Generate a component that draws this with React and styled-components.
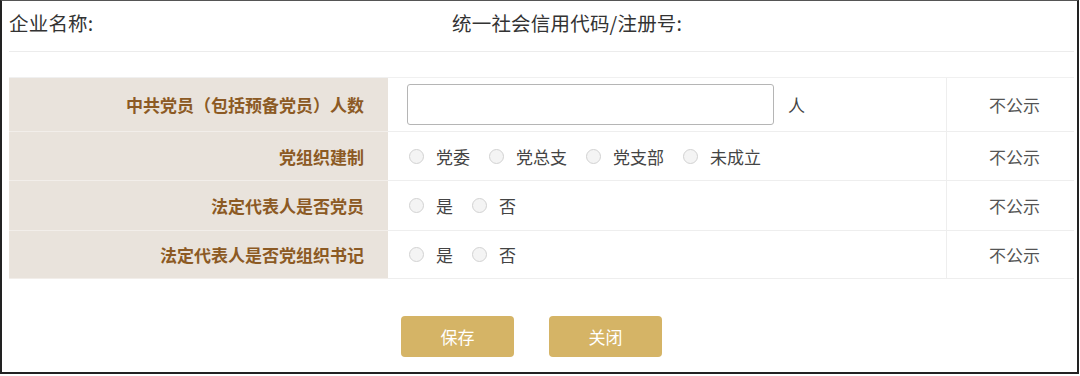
import React from "react";
import styled, { createGlobalStyle } from "styled-components";

const Global = createGlobalStyle`
  html, body { margin: 0; padding: 0; background: #fff; }
  body { font-family: "Microsoft YaHei", "Noto Sans CJK SC", "Noto Sans", sans-serif; }
`;

const Frame = styled.div`
  box-sizing: border-box;
  width: 1079px;
  height: 374px;
  border-top: 1px solid #555;
  border-left: 2px solid #222;
  border-right: 2px solid #222;
  border-bottom: 2px solid #222;
  background: #fff;
  padding: 0 3px 0 7px;
  display: flex;
  flex-direction: column;
`;

const Header = styled.div`
  display: grid;
  grid-template-columns: 443px 1fr;
  height: 51px;
  align-items: center;
  border-bottom: 1px solid #ececec;
  font-size: 19.5px;
  color: #333;
  padding-bottom: 8px;
  box-sizing: border-box;
`;

const Title = styled.div`
  white-space: nowrap;
  letter-spacing: 0.2px;
`;

const Table = styled.div`
  margin-top: 25px;
  border-top: 1px solid #f0f0f0;
  display: grid;
  grid-template-columns: 379px 559px 1fr;
`;

const Label = styled.div`
  background: #e9e3dc;
  height: ${(p) => p.h}px;
  display: flex;
  align-items: center;
  justify-content: flex-end;
  padding-right: 24px;
  font-size: 17px;
  font-weight: bold;
  color: #8c5a24;
  border-bottom: 1px solid #f2eeea;
  box-sizing: border-box;
`;

const Field = styled.div`
  height: ${(p) => p.h}px;
  display: flex;
  align-items: center;
  padding-left: 19px;
  border-bottom: 1px solid #eeeeee;
  border-right: 1px solid #eeeeee;
  box-sizing: border-box;
  font-size: 17px;
  color: #444;
`;

const Public = styled.div`
  height: ${(p) => p.h}px;
  display: flex;
  align-items: center;
  justify-content: center;
  padding-left: 8px;
  border-bottom: 1px solid #eeeeee;
  box-sizing: border-box;
  font-size: 17px;
  color: #555;
`;

const Input = styled.input`
  box-sizing: border-box;
  width: 367px;
  height: 41px;
  border: 1px solid #b5b5b5;
  border-radius: 3px;
  outline: none;
  margin: 0;
  padding: 0 8px;
`;

const Unit = styled.span`
  margin-left: 14px;
`;

const Option = styled.label`
  display: flex;
  align-items: center;
  margin-right: 17px;
  gap: 12px;
  white-space: nowrap;
`;

const Dot = styled.span`
  width: 15px;
  height: 15px;
  border-radius: 50%;
  box-sizing: border-box;
  border: 1px solid #d2d2d2;
  background: #f4f4f4;
  margin-left: 2px;
`;

const Actions = styled.div`
  display: flex;
  gap: 35px;
  padding-left: 392px;
  margin-top: 37px;
`;

const Button = styled.button`
  width: 113px;
  height: 41px;
  border: none;
  border-radius: 4px;
  background: #d5b466;
  color: #fff;
  font-family: inherit;
  font-size: 17px;
  cursor: pointer;
`;

const rows = [
  { label: "中共党员（包括预备党员）人数", h: 54, kind: "input" },
  { label: "党组织建制", h: 49, options: ["党委", "党总支", "党支部", "未成立"] },
  { label: "法定代表人是否党员", h: 50, options: ["是", "否"] },
  { label: "法定代表人是否党组织书记", h: 48, options: ["是", "否"] },
];

export default function App() {
  return (
    <>
      <Global />
      <Frame>
        <Header>
          <Title>企业名称:</Title>
          <Title>统一社会信用代码/注册号:</Title>
        </Header>
        <Table>
          {rows.map((r) => (
            <React.Fragment key={r.label}>
              <Label h={r.h}>{r.label}</Label>
              <Field h={r.h}>
                {r.kind === "input" ? (
                  <>
                    <Input type="text" />
                    <Unit>人</Unit>
                  </>
                ) : (
                  r.options.map((o) => (
                    <Option key={o}>
                      <Dot />
                      {o}
                    </Option>
                  ))
                )}
              </Field>
              <Public h={r.h}>不公示</Public>
            </React.Fragment>
          ))}
        </Table>
        <Actions>
          <Button>保存</Button>
          <Button>关闭</Button>
        </Actions>
      </Frame>
    </>
  );
}
